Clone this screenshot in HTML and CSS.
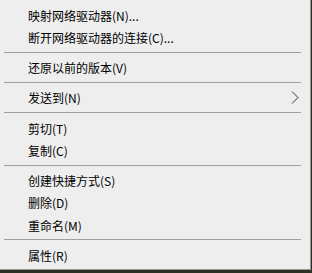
FILE: index.html
```html
<!DOCTYPE html>
<html lang="zh-CN">
<head>
  <meta charset="UTF-8" />
  <title>context menu</title>
  <link rel="stylesheet" href="styles.css">
</head>
<body>

  <div class="menu">
    <div class="item">映射网络驱动器(N)...</div>
    <div class="item">断开网络驱动器的连接(C)...</div>
    <div class="sep"></div>
    <div class="item">还原以前的版本(V)</div>
    <div class="sep"></div>
    <div class="item has-sub">
      发送到(N)
      <svg class="arrow" width="8" height="13" viewBox="0 0 8 13">
        <polyline points="1,0.5 7,6.5 1,12.5" fill="none" stroke="#333" stroke-width="1" />
      </svg>
    </div>
    <div class="sep"></div>
    <div class="item">剪切(T)</div>
    <div class="item">复制(C)</div>
    <div class="sep"></div>
    <div class="item">创建快捷方式(S)</div>
    <div class="item">删除(D)</div>
    <div class="item">重命名(M)</div>
    <div class="sep"></div>
    <div class="item">属性(R)</div>
  </div>

</body>
</html>
```

FILE: styles.css
```css
body {
  margin: 0;
  background-color: #2e3226;
  font-family: "Noto Sans CJK SC", "Noto Sans", sans-serif;
  font-size: 12px;
  color: #000;
}

.menu {
  box-sizing: border-box;
  width: 311px;
  height: 270px;
  padding-top: 4px;
  background-color: #eeeeee;
  border-right: 1px solid #979797;
  border-bottom: 1px solid #979797;
}

.item {
  height: 22.25px;
  padding-left: 28px;
  display: flex;
  align-items: center;
  white-space: nowrap;
}

.has-sub {
  justify-content: space-between;
  padding-right: 11px;
}

.arrow {
  display: block;
}

.sep {
  height: 1px;
  margin: 3px 9px 4px 4px;
  background-color: #a0a0a0;
}
```
